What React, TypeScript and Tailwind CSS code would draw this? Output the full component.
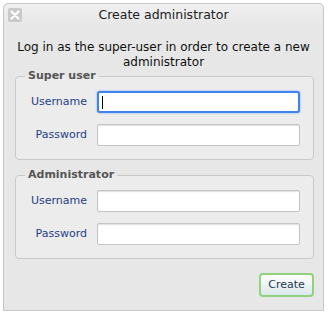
import React from 'react';

const font = { fontFamily: '"DejaVu Sans", "Liberation Sans", sans-serif' };

const Field: React.FC<{ label: string; focused?: boolean }> = ({ label, focused }) => (
  <div className="flex items-center">
    <label className="w-[71px] text-right text-[11px] text-[#1f3f86]">{label}</label>
    <div
      className={
        focused
          ? 'ml-[10px] w-[203px] h-[22px] bg-white rounded-[3px] border-2 border-[#3f84ee] shadow-[0_0_2px_#6aa2f5] flex items-center pl-[3px]'
          : 'ml-[10px] w-[203px] h-[22px] bg-white rounded-[2px] border border-[#c4c4c4] shadow-[inset_0_1px_1px_#e0e0e0]'
      }
    >
      {focused && <div className="w-px h-[13px] bg-black" />}
    </div>
  </div>
);

const Group: React.FC<{ title: string; first?: boolean }> = ({ title, first }) => (
  <fieldset
    className={
      (first ? '' : 'mt-[9px] ') +
      'ml-[11px] w-[299px] border border-[#c9c9c9] rounded-[4px] bg-[#ececec] pt-[9px] pb-[13px] flex flex-col gap-[11px]'
    }
  >
    <legend className="ml-[9px] px-[3px] text-[11px] leading-[12px] font-bold text-[#555555]">{title}</legend>
    <Field label="Username" focused={first} />
    <Field label="Password" />
  </fieldset>
);

export default function App() {
  return (
    <div className="w-[330px] h-[319px] bg-white pt-[3px] pl-[3px]" style={font}>
      <div className="w-[321px] h-[308px] border border-[#c6c6c6] rounded-t-[5px] bg-[#e7e7e7] flex flex-col">
        {/* Title bar */}
        <div className="h-[22px] flex items-center px-[4px] bg-gradient-to-b from-[#f0f0f0] to-[#e7e7e7] rounded-t-[5px]">
          <div className="w-[14px] h-[14px] rounded-[2px] bg-[#c9c9c9] flex items-center justify-center">
            <svg width="10" height="10" viewBox="0 0 10 10">
              <path d="M1.5 1.5 L8.5 8.5 M8.5 1.5 L1.5 8.5" stroke="white" strokeWidth="2.2" strokeLinecap="round" />
            </svg>
          </div>
          <div className="flex-1 text-center text-[12.5px] text-[#222222]">Create administrator</div>
          <div className="w-[14px]" />
        </div>

        <p className="mt-[14px] text-center text-[12px] leading-[15px] text-[#111111]">
          Log in as the super-user in order to create a new
          <br />
          administrator
        </p>

        <Group title="Super user" first />
        <Group title="Administrator" />

        <div className="mt-[12px] ml-[255px]">
          <button className="w-[55px] h-[24px] rounded-[4px] border-2 border-[#8fd47c] bg-gradient-to-b from-[#ffffff] to-[#dce7ec] text-[11px] text-[#1d3b52]">
            Create
          </button>
        </div>
      </div>
    </div>
  );
}
